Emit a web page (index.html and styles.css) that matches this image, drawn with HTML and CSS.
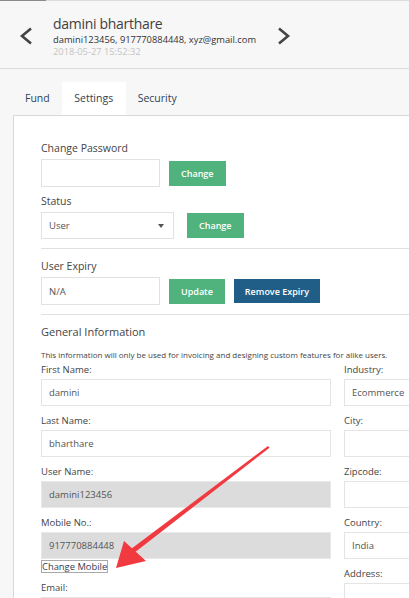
FILE: index.html
```html
<!DOCTYPE html>
<html>
<head>
<meta charset="utf-8">
<link rel="stylesheet" href="styles.css">
</head>
<body>
<div class="page">
  <header class="header">
    <button class="nav-btn" aria-label="Previous">
      <svg width="14" height="18" viewBox="0 0 14 18"><path d="M12 1.5 L3 9 L12 16.5" fill="none" stroke="#444" stroke-width="2.6"/></svg>
    </button>
    <div class="user">
      <div class="user-name">damini bharthare</div>
      <div class="user-meta">damini123456, 917770884448, xyz@gmail.com</div>
      <div class="user-date">2018-05-27 15:52:32</div>
    </div>
    <button class="nav-btn" aria-label="Next">
      <svg width="14" height="18" viewBox="0 0 14 18"><path d="M2 1.5 L11 9 L2 16.5" fill="none" stroke="#444" stroke-width="2.6"/></svg>
    </button>
  </header>

  <nav class="tabs">
    <div class="tab">Fund</div>
    <div class="tab active">Settings</div>
    <div class="tab">Security</div>
  </nav>

  <section class="panel">
    <div class="block">
      <div class="label">Change Password</div>
      <div class="row">
        <input class="input w-short" type="text">
        <button class="btn green">Change</button>
      </div>
      <div class="label">Status</div>
      <div class="row">
        <div class="select"><span>User</span><span class="caret"></span></div>
        <button class="btn green">Change</button>
      </div>
    </div>
    <hr class="sep">
    <div class="block">
      <div class="label">User Expiry</div>
      <div class="row">
        <input class="input w-short" type="text" value="N/A">
        <button class="btn green">Update</button>
        <button class="btn blue">Remove Expiry</button>
      </div>
    </div>
    <hr class="sep">
    <div class="general">
      <div class="section-title">General Information</div>
      <div class="note">This information will only be used for invoicing and designing custom features for alike users.</div>
      <div class="cols">
        <div class="col-left">
          <div class="field"><div class="flabel">First Name:</div><div class="finput">damini</div></div>
          <div class="field"><div class="flabel">Last Name:</div><div class="finput">bharthare</div></div>
          <div class="field"><div class="flabel">User Name:</div><div class="finput disabled">damini123456</div></div>
          <div class="field tight"><div class="flabel">Mobile No.:</div><div class="finput disabled">917770884448</div></div>
          <button class="link-btn">Change Mobile</button>
          <div class="field"><div class="flabel">Email:</div><div class="finput"></div></div>
        </div>
        <div class="col-right">
          <div class="field"><div class="flabel">Industry:</div><div class="finput">Ecommerce</div></div>
          <div class="field"><div class="flabel">City:</div><div class="finput"></div></div>
          <div class="field"><div class="flabel">Zipcode:</div><div class="finput"></div></div>
          <div class="field"><div class="flabel">Country:</div><div class="finput">India</div></div>
          <div class="field"><div class="flabel">Address:</div><div class="finput"></div></div>
        </div>
      </div>
    </div>
  </section>

  <svg class="annotation" width="409" height="598" viewBox="0 0 409 598">
    <polygon points="268,446 269.5,447.8 134,553 131,549" fill="#f03a40"/>
    <polygon points="116,568 124,541 146,561" fill="#f03a40"/>
  </svg>
</div>
</body>
</html>
```

FILE: styles.css
```css
* { box-sizing: border-box; }
html, body { margin: 0; padding: 0; }
body {
  background: #f7f7f7;
  font-family: "Open Sans", "Liberation Sans", sans-serif;
  color: #444;
  overflow: hidden;
  width: 409px;
  height: 598px;
}
.page { position: relative; width: 409px; height: 598px; overflow: hidden; }

.header {
  position: relative;
  height: 69px;
  border-top: 1px solid #dcdcdc;
  border-bottom: 1px solid #dcdcdc;
  display: flex;
  align-items: flex-start;
  padding: 13px 0 0 19px;
}
.header::before {
  content: "";
  position: absolute;
  left: 0; top: -1px;
  width: 46px; height: 1px;
  background: #8a8a8a;
}
.nav-btn {
  border: 0; background: none; padding: 0; margin: 13px 0 0 0;
  width: 14px; height: 18px; display: block;
}
.nav-btn svg { display: block; }
.user { margin-left: 20px; width: 224px; }
.user-name { font-size: 14px; letter-spacing: -0.3px; line-height: 18px; color: #3f3f3f; padding-top: 0.5px; height: 18.5px; }
.user-meta { font-size: 9.35px; line-height: 13px; color: #333; }
.user-date { font-size: 9.3px; line-height: 12px; color: #c4c4c4; }

.tabs {
  display: flex;
  padding: 13px 0 0 13px;
}
.tab {
  font-size: 10.5px;
  line-height: 33px;
  padding: 0 12.5px 0 12px;
  color: #2f3f55;
}
.tab.active { background: #fff; }

.panel {
  background: #fff;
  border: 1px solid #d9d9d9;
  margin-left: 13px;
  width: 460px;
  padding: 24px 0 0 27px;
  height: 600px;
}
.block { width: 500px; }
.label { font-size: 10.5px; line-height: 16px; color: #444; }
.row { display: flex; align-items: center; gap: 9px; margin: 3px 0 6px; }
.input {
  font-family: inherit;
  font-size: 9.5px;
  color: #555;
  border: 1px solid #e2e2e2;
  height: 28px;
  padding: 0 7px;
  background: #fff;
  outline: none;
}
.w-short { width: 119px; }
.select {
  width: 133px; height: 27px;
  border: 1px solid #e2e2e2;
  display: flex; align-items: center; justify-content: space-between;
  padding: 0 9px 0 7px;
  font-size: 9.5px; color: #555;
  margin-right: 4px;
}
.caret {
  width: 0; height: 0;
  border-left: 3.5px solid transparent;
  border-right: 3.5px solid transparent;
  border-top: 4px solid #555;
}
.btn {
  font-family: inherit;
  font-size: 9px;
  font-weight: 600;
  color: #fff;
  border: 0;
  height: 25px;
  padding: 0 12px;
}
.btn.green { background: #50b37d; }
.btn.blue { background: #215e87; height: 24px; padding: 0 11px; }

.sep { border: 0; border-top: 1px solid #e0e0e0; margin: 9px 0 9px; width: 400px; }

.section-title { font-size: 11px; line-height: 16px; color: #444; }
.note { font-size: 8px; line-height: 10px; color: #444; margin-top: 10px; white-space: nowrap; }
.cols { display: flex; gap: 13px; margin-top: 2px; }
.col-left { width: 290px; }
.col-right { width: 80px; }
.field { margin-bottom: 7px; }
.field.tight { margin-bottom: 1px; }
.flabel { font-size: 9.5px; line-height: 15px; color: #444; margin-bottom: 2px; }
.finput {
  height: 27px;
  border: 1px solid #e4e4e4;
  font-size: 9.5px;
  line-height: 25px;
  padding: 0 7px;
  color: #555;
  background: #fff;
}
.col-right .finput { width: 80px; }
.finput.disabled { background: #dcdcdc; border-color: #e8e8e8; }
.link-btn {
  font-family: inherit;
  font-size: 9.4px;
  line-height: 11px;
  color: #2f3f55;
  background: #fff;
  border: 1px solid #aaa;
  padding: 0;
  margin: 0 0 7px 0;
  display: block;
  white-space: nowrap;
}

.annotation { position: absolute; left: 0; top: 0; pointer-events: none; }
```
